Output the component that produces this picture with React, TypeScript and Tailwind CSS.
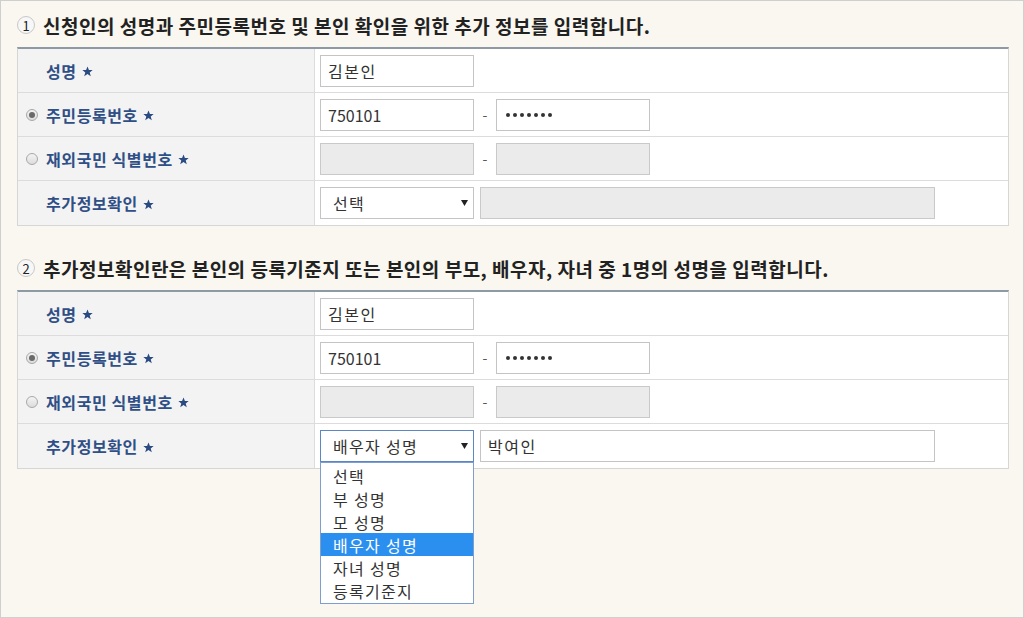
import React from 'react'

const font = { fontFamily: '"Noto Sans CJK KR", "Noto Sans", sans-serif' }

function Star() {
  return (
    <svg width="11" height="11" viewBox="0 0 10 10" className="ml-[5px] mt-[2px]">
      <path d="M5 0.4 L6.3 3.6 L9.7 3.7 L7 5.8 L8 9.4 L5 7.3 L2 9.4 L3 5.8 L0.3 3.7 L3.7 3.6 Z" fill="#2a4a82" />
    </svg>
  )
}

function Radio({ checked }: { checked?: boolean }) {
  return (
    <span className="w-[12px] h-[12px] rounded-full border border-[#a8a8a8] bg-gradient-to-b from-[#f4f4f4] to-[#dcdcdc] flex items-center justify-center mr-[8px]">
      {checked && <span className="w-[6px] h-[6px] rounded-full bg-[#6a6a6a]" />}
    </span>
  )
}

function Label({ text, radio }: { text: string; radio?: 'on' | 'off' }) {
  return (
    <div className="w-[297px] shrink-0 bg-[#f3f3f3] border-r border-[#dcdcdc] flex items-center pl-[8px]">
      {radio ? <Radio checked={radio === 'on'} /> : <span className="w-[20px]" />}
      <span className="text-[16px] font-bold text-[#2f4f86] leading-none tracking-[0.6px]">{text}</span>
      <Star />
    </div>
  )
}

function Dots() {
  return (
    <span className="flex gap-[3px] pl-[2px]">
      {[0, 1, 2, 3, 4, 5, 6].map(i => (
        <span key={i} className="w-[4px] h-[4px] rounded-full bg-[#333]" />
      ))}
    </span>
  )
}

function Input({ value, disabled, className = 'w-[154px]', dots }: { value?: string; disabled?: boolean; className?: string; dots?: boolean }) {
  const hangul = value && /[가-힣]/.test(value)
  return (
    <div
      className={`${className} h-[32px] border flex items-center pl-[7px] text-[16px] text-[#333] ${
        disabled ? 'bg-[#ebebeb] border-[#c9c9c9]' : 'bg-white border-[#c4c4c4]'
      } ${hangul ? 'tracking-[1.5px]' : ''}`}
    >
      {dots ? <Dots /> : value}
    </div>
  )
}

function Dash() {
  return <span className="w-[22px] text-center text-[14px] text-[#555]">-</span>
}

function Select({ value, open }: { value: string; open?: boolean }) {
  return (
    <div
      className={`w-[154px] h-[32px] border bg-white flex items-center pl-[12px] pr-[5px] text-[16px] text-[#333] ${
        open ? 'border-[#5b87c5]' : 'border-[#c4c4c4]'
      }`}
    >
      <span className="flex-1 tracking-[1.3px]">{value}</span>
      <svg width="7" height="6" viewBox="0 0 7 6">
        <path d="M0 0 H7 L3.5 6 Z" fill="#222" />
      </svg>
    </div>
  )
}

const options = ['선택', '부 성명', '모 성명', '배우자 성명', '자녀 성명', '등록기준지']

function Row({ children, last }: { children: React.ReactNode; last?: boolean }) {
  return <div className={`flex h-[44px] ${last ? '' : 'border-b border-[#dcdcdc]'}`}>{children}</div>
}

function Section({ num, title, open }: { num: string; title: string; open?: boolean }) {
  return (
    <div>
      <div className="flex items-center h-[24px] mb-[10px]">
        <span className="w-[18px] h-[18px] rounded-full border border-[#c8c8c8] bg-[#f7f7f7] flex items-center justify-center text-[13px] text-[#222] leading-none">
          {num}
        </span>
        <span className="ml-[8px] text-[19px] font-bold text-[#222] leading-none tracking-[0.5px]">{title}</span>
      </div>
      <div className="border-t-2 border-t-[#8d99a4] border-x border-b border-[#d6d6d6] bg-white">
        <Row>
          <Label text="성명" />
          <div className="flex items-center pl-[5px]">
            <Input value="김본인" />
          </div>
        </Row>
        <Row>
          <Label text="주민등록번호" radio="on" />
          <div className="flex items-center pl-[5px]">
            <Input value="750101" />
            <Dash />
            <Input dots />
          </div>
        </Row>
        <Row>
          <Label text="재외국민 식별번호" radio="off" />
          <div className="flex items-center pl-[5px]">
            <Input disabled />
            <Dash />
            <Input disabled />
          </div>
        </Row>
        <Row last>
          <Label text="추가정보확인" />
          <div className="flex items-center pl-[5px] gap-[6px]">
            <div className="relative">
              <Select value={open ? '배우자 성명' : '선택'} open={open} />
              {open && (
                <div className="absolute left-0 top-[32px] w-[154px] border border-[#7f9ed0] bg-white py-[1px] z-10">
                  {options.map(o => (
                    <div
                      key={o}
                      className={`h-[23px] flex items-center pl-[12px] text-[16px] tracking-[1.3px] ${
                        o === '배우자 성명' ? 'bg-[#2b8ff0] text-white' : 'text-[#333]'
                      }`}
                    >
                      {o}
                    </div>
                  ))}
                </div>
              )}
            </div>
            {open ? <Input value="박여인" className="w-[455px]" /> : <Input disabled className="w-[455px]" />}
          </div>
        </Row>
      </div>
    </div>
  )
}

export default function App() {
  return (
    <div style={font} className="w-[1024px] h-[618px] overflow-hidden border border-[#cfcfcf] bg-[#f9f7ef] pl-[16px] pr-[14px] pt-[12px]">
      <Section num="1" title="신청인의 성명과 주민등록번호 및 본인 확인을 위한 추가 정보를 입력합니다." />
      <div className="h-[30px]" />
      <Section num="2" title="추가정보확인란은 본인의 등록기준지 또는 본인의 부모, 배우자, 자녀 중 1명의 성명을 입력합니다." open />
    </div>
  )
}
